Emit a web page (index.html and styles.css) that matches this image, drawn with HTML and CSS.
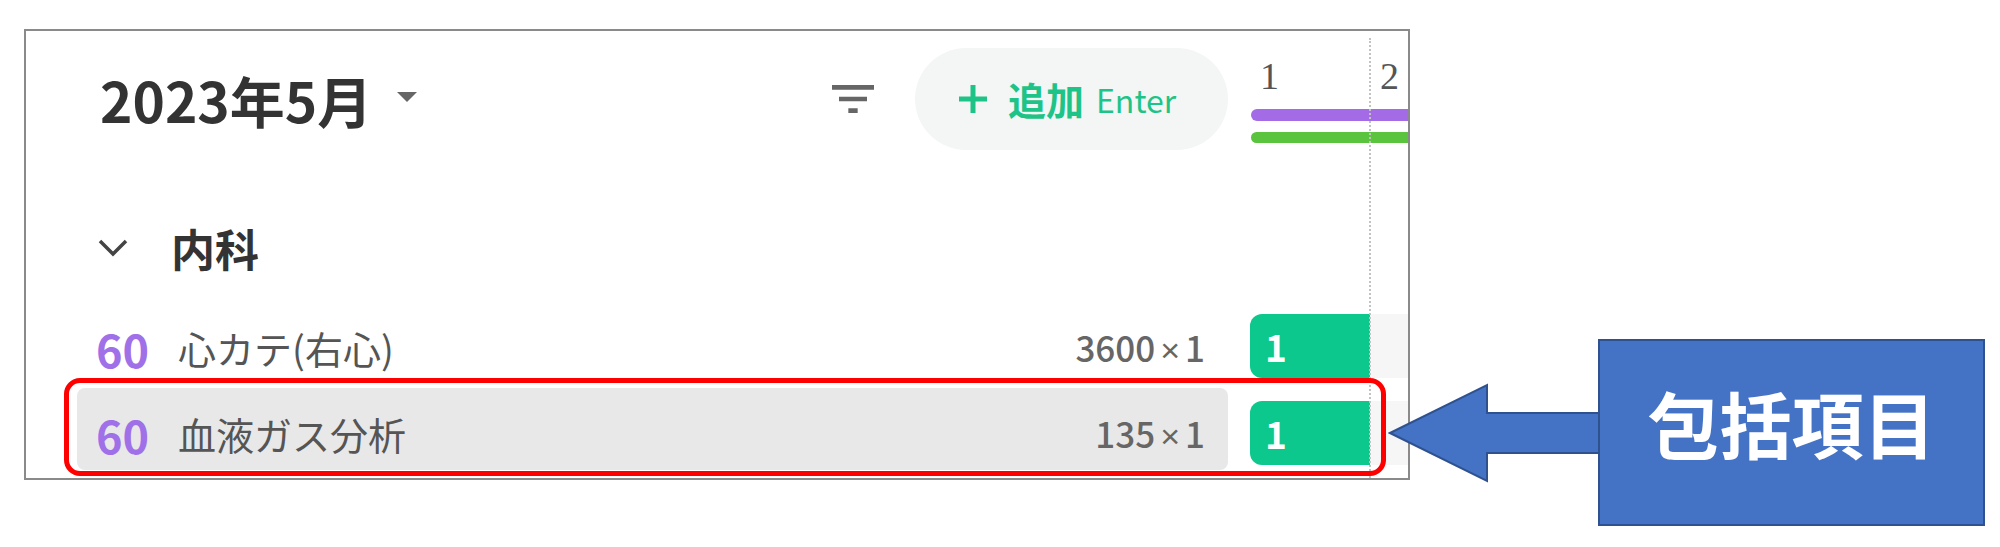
FILE: index.html
```html
<!DOCTYPE html>
<html lang="ja">
<head>
<meta charset="utf-8">
<title>2023年5月</title>
<link rel="stylesheet" href="styles.css">
</head>
<body>
<div class="page">
  <div class="card">
    <div class="head-left">
      <div class="title">2023年5月<span class="caret"></span></div>
      <svg class="filter" viewBox="0 0 24 24" width="56" height="56"><path d="M10 18h4v-2h-4v2zM3 6v2h18V6H3zm3 7h12v-2H6v2z" fill="#666"/></svg>
      <div class="add">
        <svg class="plus" viewBox="0 0 32 32" width="32" height="32"><path d="M16 2v28M2 16h28" stroke="#1ec487" stroke-width="5" fill="none"/></svg>
        <span class="add-label">追加</span>
        <span class="add-key">Enter</span>
      </div>
    </div>
    <div class="head-right">
      <div class="days"><span class="day">1</span><span class="day">2</span></div>
      <div class="bar bar-purple"></div>
      <div class="bar bar-green"></div>
    </div>

    <div class="section">
      <svg class="chev" viewBox="0 0 32 20" width="32" height="20"><path d="M3 3l13 13L29 3" stroke="#444" stroke-width="3.5" fill="none"/></svg>
      <span class="section-name">内科</span>
    </div>
    <div class="section-track"></div>

    <div class="item">
      <span class="num">60</span>
      <span class="name">心カテ(右心)</span>
      <span class="count">3600<span class="times">×</span>1</span>
    </div>
    <div class="track">
      <div class="slot filled">1</div>
      <div class="slot rest"></div>
    </div>

    <div class="item selected">
      <span class="num">60</span>
      <span class="name">血液ガス分析</span>
      <span class="count">135<span class="times">×</span>1</span>
    </div>
    <div class="track second">
      <div class="slot filled">1</div>
      <div class="slot rest"></div>
    </div>

    <div class="dotline"></div>
    <div class="callout-frame"></div>
  </div>

  <div class="callout">
    <svg class="arrow" viewBox="0 0 214 100" width="214" height="100"><polygon points="2,50 99,2 99,30 214,30 214,70 99,70 99,98" fill="#4472c4" stroke="#2f528f" stroke-width="2"/></svg>
    <div class="callout-box">包括項目</div>
  </div>
</div>
</body>
</html>
```

FILE: styles.css
```css
* { box-sizing: border-box; }
html, body { margin: 0; padding: 0; background: #fff; }
body {
  width: 2000px;
  height: 547px;
  overflow: hidden;
  font-family: "Noto Sans CJK JP", "Noto Sans", sans-serif;
}
.page {
  position: relative;
  height: 547px;
  padding: 29px 0 0 24px;
}
.card {
  position: relative;
  width: 1386px;
  height: 451px;
  border: 2px solid #8a8a8a;
  overflow: hidden;
  display: grid;
  grid-template-columns: 1224px 1fr;
  grid-template-rows: 119px 152px 86px 82px;
  background: #fff;
}

/* header */
.head-left {
  display: flex;
  align-items: center;
  padding: 17px 22px 0 51px;
}
.title {
  display: flex;
  align-items: center;
  padding-left: 23px;
  font-size: 55px;
  font-weight: 700;
  color: #333;
  line-height: 1;
}
.caret {
  margin-left: 25px;
  margin-top: -4px;
  width: 0;
  height: 0;
  border-left: 10.5px solid transparent;
  border-right: 10.5px solid transparent;
  border-top: 10px solid #666;
}
.filter {
  margin-left: auto;
  margin-right: 34px;
}
.add {
  display: flex;
  align-items: center;
  width: 313px;
  height: 102px;
  border-radius: 51px;
  background: #f4f5f5;
  padding-left: 42px;
  color: #1ec487;
}
.plus { flex: none; }
.add-label {
  margin-left: 19px;
  font-size: 38px;
  font-weight: 700;
  line-height: 1;
}
.add-key {
  margin-left: 12px;
  font-size: 32px;
  font-weight: 400;
  line-height: 1;
}
.head-right {
  padding-top: 23px;
}
.days {
  display: grid;
  grid-template-columns: 120px 120px;
}
.day {
  font-family: "Liberation Serif", serif;
  font-size: 38px;
  line-height: 44px;
  color: #555;
  padding-left: 10px;
}
.bar {
  margin-left: 1px;
  width: 300px;
  border-radius: 6px 0 0 6px;
}
.bar-purple {
  margin-top: 11px;
  height: 12px;
  background: #a36be6;
}
.bar-green {
  margin-top: 11px;
  height: 11px;
  background: #5bc43f;
}

/* section */
.section {
  display: flex;
  align-items: center;
  padding: 58px 0 14px 71px;
}
.chev { flex: none; }
.section-name {
  margin-left: 42px;
  font-size: 44px;
  font-weight: 700;
  color: #333;
  line-height: 1;
}

/* items */
.item {
  align-self: start;
  display: flex;
  align-items: center;
  height: 82px;
  margin: 0 22px 0 51px;
  padding: 10px 23px 0 19px;
  border-radius: 8px;
}
.item.selected {
  background: #e8e8e8;
}
.num {
  font-size: 45px;
  font-weight: 700;
  color: #a070e8;
  line-height: 1;
}
.name {
  margin-left: 29px;
  font-size: 38px;
  color: #555;
  line-height: 1;
}
.count {
  margin-left: auto;
  font-size: 35px;
  font-weight: 500;
  color: #666;
  line-height: 1;
}
.times {
  font-family: "Liberation Sans", sans-serif;
  font-weight: 400;
  font-size: 34px;
  margin: 0 5px;
}
.track {
  align-self: start;
  display: grid;
  grid-template-columns: 120px 1fr;
  padding-top: 12px;
}
.track.second {
  padding-top: 13px;
}
.slot {
  height: 64px;
}
.slot.filled {
  display: flex;
  align-items: center;
  padding-left: 15px;
  background: #0cc88c;
  border-radius: 12px 0 0 12px;
  color: #fff;
  font-size: 37px;
  font-weight: 700;
  line-height: 1;
}
.slot.rest {
  background: #f6f6f6;
}

/* overlays */
.dotline {
  position: absolute;
  left: 1343px;
  top: 7px;
  bottom: 0;
  border-left: 2px dotted #c2c2c2;
}
.callout-frame {
  position: absolute;
  left: 38px;
  top: 347px;
  width: 1322px;
  height: 98px;
  border: 5px solid #ff0000;
  border-radius: 16px;
}
.callout {
  position: absolute;
  left: 1388px;
  top: 339px;
  height: 187px;
  display: flex;
  align-items: center;
}
.arrow { flex: none; }
.callout-box {
  margin-left: -4px;
  width: 387px;
  height: 187px;
  display: flex;
  align-items: center;
  justify-content: center;
  padding-bottom: 22px;
  background: #4472c4;
  border: 2px solid #2f528f;
  color: #fff;
  font-size: 72px;
  font-weight: 700;
  line-height: 1;
}
```
